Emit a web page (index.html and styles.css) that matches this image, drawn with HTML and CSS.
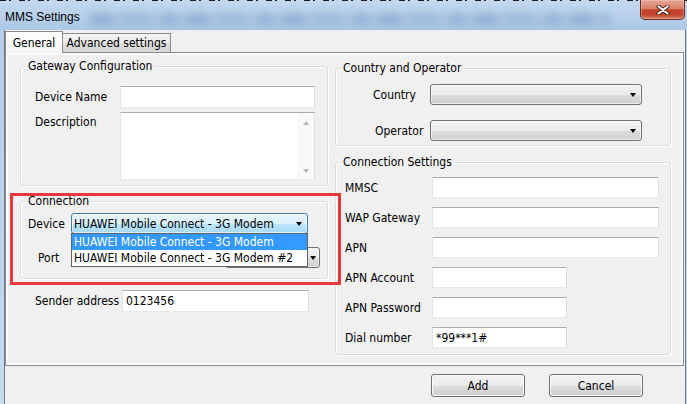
FILE: index.html
```html
<!DOCTYPE html>
<html lang="en">
<head>
  <meta charset="UTF-8">
  <title>MMS Settings</title>
  <link rel="stylesheet" href="styles.css">
</head>
<body>
  <div class="window">
    <div class="titlebar">
      <div class="title">MMS Settings</div>
      <div class="title-glass"></div>
      <div class="close-btn">
        <svg width="14" height="10" viewBox="0 0 14 10">
          <path d="M2.5 1.5 L11.5 8.5 M11.5 1.5 L2.5 8.5" stroke="#4a1c12" stroke-width="4" stroke-linecap="round" fill="none"/>
          <path d="M2.5 1.5 L11.5 8.5 M11.5 1.5 L2.5 8.5" stroke="#fff" stroke-width="2.2" stroke-linecap="round" fill="none"/>
        </svg>
      </div>
    </div>

    <div class="client">
      <div class="tabs">
        <div class="tab active">General</div>
        <div class="tab">Advanced settings</div>
      </div>

      <div class="panel">
        <div class="col-left">
          <div class="group gateway">
            <div class="group-title">Gateway Configuration</div>
            <div class="gateway-form">
              <label>Device Name</label>
              <input class="textbox" type="text">
              <label class="label-top">Description</label>
              <div class="textarea">
                <div class="vscroll">
                  <span class="arrow-up"></span>
                  <span class="arrow-down"></span>
                </div>
              </div>
            </div>
          </div>

          <div class="group connection">
            <div class="group-title">Connection</div>
            <div class="row device-row">
              <label class="device-label">Device</label>
              <div class="combo combo-open device-combo">
                <span class="combo-text">HUAWEI Mobile Connect - 3G Modem</span>
                <span class="arrow"></span>
                <ul class="dropdown">
                  <li class="selected">HUAWEI Mobile Connect - 3G Modem</li>
                  <li>HUAWEI Mobile Connect - 3G Modem #2</li>
                </ul>
              </div>
            </div>
            <div class="row port-row">
              <label class="port-label">Port</label>
              <input class="textbox port-input" type="text">
              <div class="combo port-combo"><span class="combo-text"></span><span class="arrow"></span></div>
            </div>
          </div>

          <div class="row sender-row">
            <label class="sender-label">Sender address</label>
            <input class="textbox sender-input" type="text" value="0123456">
          </div>
        </div>

        <div class="col-right">
          <div class="group country">
            <div class="group-title">Country and Operator</div>
            <div class="row country-row">
              <label class="country-label">Country</label>
              <div class="combo op-combo"><span class="combo-text"></span><span class="arrow"></span></div>
            </div>
            <div class="row operator-row">
              <label class="operator-label">Operator</label>
              <div class="combo op-combo"><span class="combo-text"></span><span class="arrow"></span></div>
            </div>
          </div>

          <div class="group settings">
            <div class="group-title">Connection Settings</div>
            <div class="settings-form">
              <label>MMSC</label>
              <input class="textbox long" type="text">
              <label>WAP Gateway</label>
              <input class="textbox long" type="text">
              <label>APN</label>
              <input class="textbox long" type="text">
              <label>APN Account</label>
              <input class="textbox short" type="text">
              <label>APN Password</label>
              <input class="textbox short" type="text">
              <label>Dial number</label>
              <input class="textbox short" type="text" value="*99***1#">
            </div>
          </div>
        </div>
      </div>

      <div class="buttons">
        <button class="btn">Add</button>
        <button class="btn">Cancel</button>
      </div>
    </div>
  </div>

  <div class="highlight"></div>
</body>
</html>
```

FILE: styles.css
```css
* {
  box-sizing: border-box;
}

html, body {
  margin: 0;
}

body {
  width: 687px;
  height: 404px;
  overflow: hidden;
  position: relative;
  background: linear-gradient(180deg, #b4cde9 0%, #bcd3ec 50%, #c6daf0 100%);
  font-family: "DejaVu Sans Condensed", "DejaVu Sans", "Liberation Sans", sans-serif;
  font-size: 12px;
  color: #000;
}

.window {
  display: flex;
  flex-direction: column;
  height: 404px;
}

/* title bar */
.titlebar {
  height: 30px;
  flex: none;
  display: flex;
  align-items: flex-start;
  background:
    repeating-linear-gradient(90deg, #1c1c1c 0 6px, transparent 6px 9px, #1c1c1c 9px 11px, transparent 11px 19px) top left / 100% 1px no-repeat,
    linear-gradient(180deg, #c4d9ef 0%, #b8d0ea 55%, #aac7e6 100%);
}

.title {
  padding: 10px 0 0 5px;
  line-height: 14px;
  font-family: "Liberation Sans", sans-serif;
  white-space: nowrap;
}

.title-glass {
  flex: 1;
  height: 12px;
  margin: 13px 30px 0 10px;
  background: repeating-linear-gradient(90deg,
    rgba(70, 110, 165, 0.3) 0 22px, rgba(70, 110, 165, 0.1) 22px 30px,
    rgba(70, 110, 165, 0.22) 30px 62px, rgba(70, 110, 165, 0.08) 62px 70px,
    rgba(70, 110, 165, 0.28) 70px 88px, rgba(70, 110, 165, 0.1) 88px 96px);
  filter: blur(4px);
}

.close-btn {
  width: 45px;
  height: 20px;
  margin-right: 2px;
  display: flex;
  align-items: center;
  justify-content: center;
  border: 1px solid #6b2a1e;
  border-top: none;
  border-radius: 0 0 5px 5px;
  background: linear-gradient(180deg, #e5a594 0%, #d8806a 45%, #c4412a 52%, #c24a32 80%, #d9836b 100%);
  box-shadow: inset 0 0 0 1px rgba(255, 255, 255, 0.25);
}

/* client area */
.client {
  flex: 1;
  margin: 0 1px 0 4px;
  display: flex;
  flex-direction: column;
  background: #f0f0f0;
  border-left: 1px solid #6f7884;
  border-right: 1px solid #6f7884;
}

.tabs {
  display: flex;
  align-items: flex-end;
  margin-top: 1px;
  position: relative;
  z-index: 1;
}

.tab {
  height: 19px;
  width: 109px;
  margin-left: -1px;
  line-height: 18px;
  text-align: center;
  border: 1px solid #898c95;
  border-bottom: none;
  background: linear-gradient(180deg, #f3f3f3 0%, #ebebeb 50%, #dddddd 51%, #d6d6d6 100%);
  white-space: nowrap;
}

.tab.active {
  height: 22px;
  width: 58px;
  margin-left: 0;
  margin-bottom: -1px;
  padding-top: 2px;
  background: linear-gradient(180deg, #fdfdfd 0%, #f4f4f4 100%);
  position: relative;
  z-index: 2;
}

.panel {
  height: 314px;
  margin-right: 1px;
  display: flex;
  gap: 7px;
  padding: 13px 0 0 14px;
  border: 1px solid #898c95;
  background: #f0f0f0;
  box-shadow: inset 0 0 0 2px #fbfbfb;
}

.col-left {
  width: 308px;
}

.col-right {
  width: 336px;
  padding-top: 2px;
}

/* group boxes */
.group {
  border: 1px solid #d5dfe5;
  border-radius: 3px;
  box-shadow: inset 1px 1px 0 #fff, 1px 1px 0 #fff;
}

.group-title {
  width: fit-content;
  margin: -8px 0 0 5px;
  padding: 0 2px;
  line-height: 14px;
  background: #f0f0f0;
  white-space: nowrap;
}

label {
  line-height: 14px;
  white-space: nowrap;
}

.textbox {
  display: block;
  height: 21px;
  margin: 0;
  padding: 0 3px;
  font: inherit;
  color: #000;
  background: #fff;
  border: 1px solid;
  border-color: #abadb3 #dbdfe6 #e3e9ef #e2e3ea;
  outline: none;
}

.row {
  display: flex;
  align-items: center;
}

/* gateway */
.gateway {
  padding-bottom: 5px;
}

.gateway-form {
  display: grid;
  grid-template-columns: 85px 195px;
  row-gap: 4px;
  align-items: center;
  margin-top: 13px;
  padding-left: 14px;
}

.gateway-form .textbox {
  height: 22px;
}

.label-top {
  align-self: start;
  margin-top: 3px;
}

.textarea {
  height: 68px;
  display: flex;
  justify-content: flex-end;
  background: #fff;
  border: 1px solid;
  border-color: #abadb3 #dbdfe6 #e3e9ef #e2e3ea;
}

.vscroll {
  width: 17px;
  display: flex;
  flex-direction: column;
  align-items: center;
  justify-content: space-between;
  padding: 8px 0 6px;
  background: #f8f8f8;
}

.arrow-up {
  border-bottom: 4px solid #b4b4b4;
  border-left: 3px solid transparent;
  border-right: 3px solid transparent;
}

.arrow-down {
  border-top: 4px solid #b4b4b4;
  border-left: 3px solid transparent;
  border-right: 3px solid transparent;
}

/* combo boxes */
.combo {
  position: relative;
  height: 21px;
  display: flex;
  align-items: center;
  justify-content: space-between;
  padding: 0 5px 0 2px;
  border: 1px solid #707070;
  border-radius: 3px;
  background: linear-gradient(180deg, #f2f2f2 0%, #ebebeb 50%, #dddddd 51%, #cfcfcf 100%);
  box-shadow: inset 0 0 0 1px rgba(255, 255, 255, 0.6);
}

.combo-text {
  white-space: nowrap;
  overflow: hidden;
}

.arrow {
  flex: none;
  border-top: 4px solid #000;
  border-left: 3.5px solid transparent;
  border-right: 3.5px solid transparent;
}

.combo-open {
  border-color: #3c7fb1;
  background: linear-gradient(180deg, #eaf6fd 0%, #d9f0fc 50%, #bee6fd 51%, #a7d9f5 100%);
}

.dropdown {
  position: absolute;
  left: -1px;
  top: 19px;
  z-index: 5;
  width: 237px;
  margin: 0;
  padding: 0;
  list-style: none;
  background: #fff;
  border: 1px solid #646464;
}

.dropdown li {
  height: 16px;
  line-height: 16px;
  padding-left: 2px;
  white-space: nowrap;
}

.dropdown li.selected {
  background: #3399ff;
  color: #fff;
}

/* connection */
.connection {
  margin-top: 15px;
  padding-bottom: 10px;
}

.device-row {
  margin-top: 5px;
  padding-left: 7px;
}

.device-label {
  width: 43px;
}

.device-combo {
  width: 237px;
}

.port-row {
  margin-top: 13px;
  padding-left: 7px;
}

.port-label {
  width: 34px;
  margin-left: 10px;
}

.port-input {
  width: 84px;
}

.port-combo {
  width: 95px;
  margin-left: 69px;
  padding-right: 3px;
}

.sender-row {
  margin-top: 11px;
  padding-left: 15px;
}

.sender-label {
  width: 87px;
}

.sender-input {
  width: 187px;
  height: 22px;
}

/* country */
.country {
  padding-bottom: 4px;
}

.country-row {
  margin-top: 9px;
}

.operator-row {
  margin-top: 15px;
}

.country-label {
  width: 57px;
  margin-left: 37px;
}

.operator-label {
  width: 55px;
  margin-left: 39px;
}

.op-combo {
  width: 212px;
}

/* connection settings */
.settings {
  margin-top: 16px;
  padding-bottom: 6px;
}

.settings-form {
  display: grid;
  grid-template-columns: 87px auto;
  justify-items: start;
  align-items: center;
  row-gap: 9px;
  margin-top: 8px;
  padding-left: 9px;
}

.textbox.long {
  width: 227px;
}

.textbox.short {
  width: 135px;
}

/* dialog buttons */
.buttons {
  display: flex;
  justify-content: flex-end;
  gap: 24px;
  padding: 8px 42px 0 0;
}

.btn {
  width: 94px;
  height: 23px;
  font: inherit;
  color: #000;
  border: 1px solid #707070;
  border-radius: 3px;
  background: linear-gradient(180deg, #f2f2f2 0%, #ebebeb 50%, #dddddd 51%, #cfcfcf 100%);
  box-shadow: inset 0 0 0 1px #fcfcfc;
}

/* annotation */
.highlight {
  position: absolute;
  left: 10px;
  top: 193px;
  width: 331px;
  height: 92px;
  border: 3px solid #e8383d;
}
```
